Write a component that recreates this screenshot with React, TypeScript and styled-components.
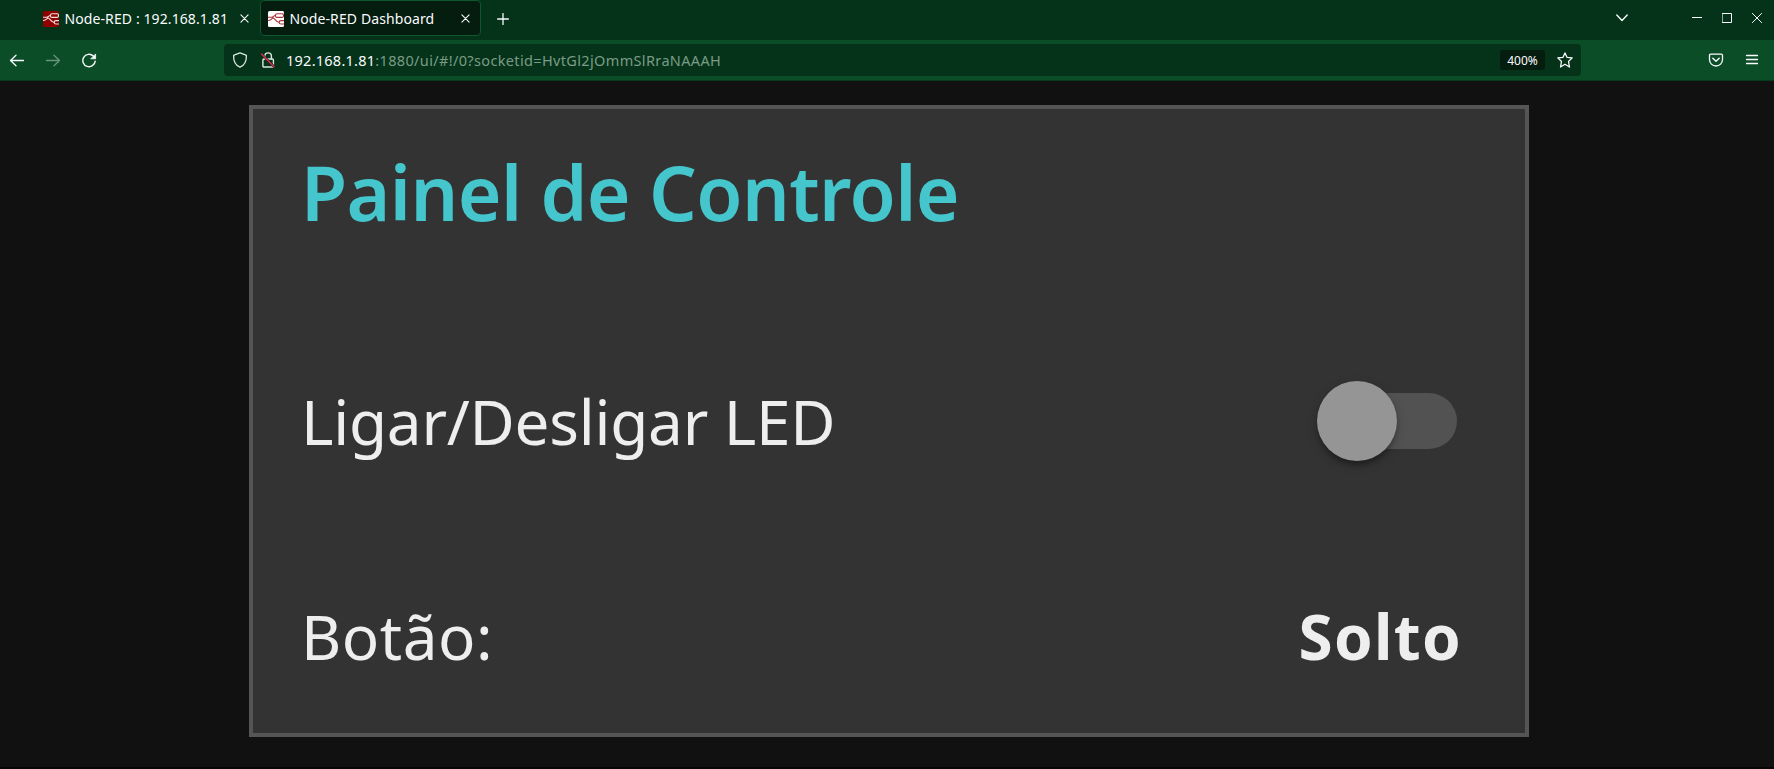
import React from 'react';
import styled, { createGlobalStyle } from 'styled-components';

const GlobalStyle = createGlobalStyle`
  *, *::before, *::after { box-sizing: border-box; }
  body {
    margin: 0;
    background: #111;
    font-family: "Noto Sans", "Open Sans", sans-serif;
  }
`;

const Window = styled.div`
  display: flex;
  flex-direction: column;
  height: 769px;
  background: #111;
  border-bottom: 2px solid #090506;
  overflow: hidden;
`;

const TabStrip = styled.header`
  display: flex;
  align-items: flex-start;
  height: 40px;
  padding: 0 12px 0 35px;
  background: #043319;
  color: #fbfbfe;
`;

const Tab = styled.div<{ $active?: boolean; $width: number }>`
  display: flex;
  align-items: center;
  width: ${(p) => p.$width}px;
  height: 36px;
  padding: 1px 10px 0 7px;
  border: 1px solid ${(p) => (p.$active ? '#0d5630' : 'transparent')};
  border-radius: 4px;
  background: ${(p) => (p.$active ? '#041d0f' : 'transparent')};
  svg { flex: none; display: block; }
`;

const TabTitle = styled.span`
  flex: 1;
  margin-left: 5.5px;
  font-size: 14px;
  line-height: 20px;
  letter-spacing: 0.1px;
  white-space: nowrap;
`;

const NewTab = styled.button`
  display: flex;
  align-items: center;
  justify-content: center;
  width: 43px;
  height: 37px;
  padding: 0;
  border: 0;
  background: none;
  color: inherit;
`;

const WindowControls = styled.div`
  display: flex;
  align-items: center;
  height: 36px;
  margin-left: auto;
  svg { display: block; }
`;

const ListTabs = styled.div`
  margin-right: 64px;
`;

const Buttons = styled.div`
  display: flex;
  gap: 20px;
`;

const Toolbar = styled.nav`
  display: flex;
  align-items: center;
  height: 41px;
  padding: 0 14px 1px 9px;
  background: #0a4d26;
  border-bottom: 1px solid #053a1b;
  color: #fbfbfe;
  svg { display: block; flex: none; }
`;

const NavButtons = styled.div`
  display: flex;
  gap: 20px;
  width: 215px;
`;

const AddressBar = styled.div`
  display: flex;
  align-items: center;
  width: 1357px;
  height: 32px;
  padding: 0 8px;
  border-radius: 4px;
  background: #043319;
`;

const SiteIcons = styled.div`
  display: flex;
  gap: 12px;
  width: 54px;
  color: #dce6df;
`;

const Url = styled.span`
  flex: 1;
  font-size: 14.5px;
  line-height: 22px;
  letter-spacing: 0.35px;
  color: #7b9b87;
  white-space: nowrap;
`;

const Host = styled.span`
  color: #fbfbfe;
  letter-spacing: 0.25px;
`;

const Zoom = styled.span`
  width: 45px;
  height: 20px;
  margin-right: 12px;
  border-radius: 3px;
  background: #041d0f;
  font-size: 12px;
  line-height: 21px;
  text-align: center;
`;

const ToolbarEnd = styled.div`
  display: flex;
  gap: 20px;
  margin-left: auto;
`;

const Page = styled.main`
  display: flex;
  padding: 24px 0 0 249px;
`;

const Card = styled.section`
  display: flex;
  flex-direction: column;
  width: 1280px;
  height: 632px;
  padding: 35px 63px 0 48px;
  border: 4px solid #555;
  background: #333;
  color: #eee;
`;

const Row = styled.div<{ $before?: number }>`
  display: flex;
  align-items: center;
  justify-content: space-between;
  height: 96px;
  margin-top: ${(p) => p.$before ?? 0}px;
  white-space: nowrap;
`;

const Title = styled.h1`
  margin: 0;
  font-size: 75px;
  font-weight: 600;
  line-height: 96px;
  letter-spacing: -0.6px;
  color: #45c6cd;
`;

const Label = styled.span<{ $spacing?: number }>`
  font-size: 62px;
  line-height: 96px;
  letter-spacing: ${(p) => p.$spacing ?? 0}px;
`;

const Value = styled(Label)`
  font-weight: 700;
`;

const Track = styled.div`
  display: flex;
  align-items: center;
  width: 136px;
  height: 56px;
  margin-right: 5px;
  border-radius: 28px;
  background: #525252;
`;

const Thumb = styled.div`
  flex: none;
  width: 80px;
  height: 80px;
  margin-left: -4px;
  border-radius: 50%;
  background: #959595;
  box-shadow: 0 4px 12px rgba(0, 0, 0, 0.2), 0 4px 4px rgba(0, 0, 0, 0.14),
    0 8px 4px -4px rgba(0, 0, 0, 0.12);
`;

const stroke = { fill: 'none', stroke: 'currentColor', strokeLinecap: 'round', strokeLinejoin: 'round' } as const;

const NodeRedIcon = ({ bg, line }: { bg: string; line: string }) => (
  <svg width="16" height="16" viewBox="0 0 16 16">
    <rect width="16" height="16" rx="1.5" fill={bg} />
    <g fill="none" stroke={line} strokeWidth="1.1">
      <rect x="7.5" y="2.8" width="8" height="3.6" rx="1.5" />
      <path d="M0 6.200h3.400c2.200 0 2-1.700 4.100-1.700M3.400 6.200c4 0 4 5.300 8 5.300M0 9.500c3.400 0 3.400-2.500 5.600-2.500" />
      <path d="M16 9.600h-3q-1.800 0-1.800 1.500v.4q0 1.500 1.800 1.500H16" />
    </g>
  </svg>
);

const CloseIcon = ({ size, width }: { size: number; width: number }) => (
  <svg width={size} height={size} viewBox="0 0 10 10" {...stroke} strokeWidth={width}>
    <path d="M1 1l8 8M9 1l-8 8" />
  </svg>
);

const BackIcon = () => (
  <svg width="16" height="16" viewBox="0 0 16 16" {...stroke} strokeWidth="1.3">
    <path d="M14.5 8.500H1.500M7 3.200L1.500 8.500L7 13.800" />
  </svg>
);

const ForwardIcon = () => (
  <svg width="16" height="16" viewBox="0 0 16 16" {...stroke} strokeWidth="1.3" opacity="0.4">
    <path d="M1.500 8.500h13M9 3.200L14.500 8.500L9 13.800" />
  </svg>
);

const ReloadIcon = () => (
  <svg width="16" height="16" viewBox="0 0 16 16" {...stroke} strokeWidth="1.4">
    <path d="M12.300 4A6.200 6.200 0 1 0 14.200 9.100" />
    <path d="M14.600 2.300v4.500h-4.500z" fill="currentColor" strokeWidth="0.8" />
  </svg>
);

const ShieldIcon = () => (
  <svg width="16" height="16" viewBox="0 0 16 16" {...stroke} strokeWidth="1.3">
    <path d="M8 .9L14 3.1q.4.2.4.6c.1 5.2-1.7 9.5-6.400 11.500C3.300 13.200 1.500 8.900 1.600 3.700q0-.4.4-.6z" />
  </svg>
);

const InsecureIcon = () => (
  <svg width="16" height="16" viewBox="0 0 16 16" {...stroke} strokeWidth="1.4">
    <path d="M4.800 7V4.200a3.300 3.300 0 0 1 6.600 0V7" />
    <rect x="2.900" y="7" width="10.500" height="8" rx="1" />
    <path d="M1.500 2L14 14.700" stroke="#043319" strokeWidth="2.400" />
    <path d="M1.500 2L14 14.700" stroke="#e22850" strokeWidth="1.400" />
  </svg>
);

const StarIcon = () => (
  <svg width="16" height="16" viewBox="0 0 16 16" {...stroke} strokeWidth="1.3">
    <path d="M8 .9L10 5.300L15.200 5.900L11.500 9.500L12.500 15L8 12.300L3.500 15L4.500 9.500L.8 5.900L6 5.300z" />
  </svg>
);

const PocketIcon = () => (
  <svg width="16" height="16" viewBox="0 0 16 16" {...stroke} strokeWidth="1.3">
    <path d="M2.700 2.200h10.600q1.200 0 1.200 1.200V7.500a6.500 6.500 0 0 1-13 0V3.400q0-1.200 1.200-1.200z" />
    <path d="M4.800 6.200L8 9.300L11.200 6.200" strokeWidth="1.400" />
  </svg>
);

const MenuIcon = () => (
  <svg width="16" height="16" viewBox="0 0 16 16" {...stroke} strokeWidth="1.3">
    <path d="M2.500 3.500h11M2.500 7.500h11M2.500 11.500h11" />
  </svg>
);

export default function App() {
  return (
    <>
      <GlobalStyle />
      <Window>
        <TabStrip>
          <Tab $width={225}>
            <NodeRedIcon bg="#8f0000" line="#f3dede" />
            <TabTitle>Node-RED : 192.168.1.81</TabTitle>
            <CloseIcon size={9} width={1.2} />
          </Tab>
          <Tab $active $width={221}>
            <NodeRedIcon bg="#fff" line="#a8333b" />
            <TabTitle>Node-RED Dashboard</TabTitle>
            <CloseIcon size={9} width={1.2} />
          </Tab>
          <NewTab aria-label="+">
            <svg width="12" height="12" viewBox="0 0 12 12" {...stroke} strokeWidth="1.3">
              <path d="M6 .6v10.800M.6 6h10.800" />
            </svg>
          </NewTab>
          <WindowControls>
            <ListTabs>
              <svg width="12" height="8" viewBox="0 0 12 8" {...stroke} strokeWidth="1.4">
                <path d="M.8 1L6 6.400L11.200 1" />
              </svg>
            </ListTabs>
            <Buttons>
              <svg width="10" height="10" viewBox="0 0 10 10" {...stroke} strokeLinecap="butt">
                <path d="M0 4.500h10" />
              </svg>
              <svg width="10" height="10" viewBox="0 0 10 10" {...stroke}>
                <rect x=".5" y=".5" width="9" height="9" />
              </svg>
              <svg width="10" height="10" viewBox="0 0 10 10" {...stroke}>
                <path d="M.4 .4l9.200 9.200M9.600 .4L.4 9.600" />
              </svg>
            </Buttons>
          </WindowControls>
        </TabStrip>

        <Toolbar>
          <NavButtons>
            <BackIcon />
            <ForwardIcon />
            <ReloadIcon />
          </NavButtons>
          <AddressBar>
            <SiteIcons>
              <ShieldIcon />
              <InsecureIcon />
            </SiteIcons>
            <Url>
              <Host>192.168.1.81</Host>:1880/ui/#!/0?socketid=HvtGl2jOmmSlRraNAAAH
            </Url>
            <Zoom>400%</Zoom>
            <StarIcon />
          </AddressBar>
          <ToolbarEnd>
            <PocketIcon />
            <MenuIcon />
          </ToolbarEnd>
        </Toolbar>

        <Page>
          <Card>
            <Row>
              <Title>Painel de Controle</Title>
            </Row>
            <Row $before={133}>
              <Label $spacing={-0.25}>Ligar/Desligar LED</Label>
              <Track role="switch" aria-checked="false">
                <Thumb />
              </Track>
            </Row>
            <Row $before={119}>
              <Label $spacing={0.5}>Botão:</Label>
              <Value $spacing={1.3}>Solto</Value>
            </Row>
          </Card>
        </Page>
      </Window>
    </>
  );
}
